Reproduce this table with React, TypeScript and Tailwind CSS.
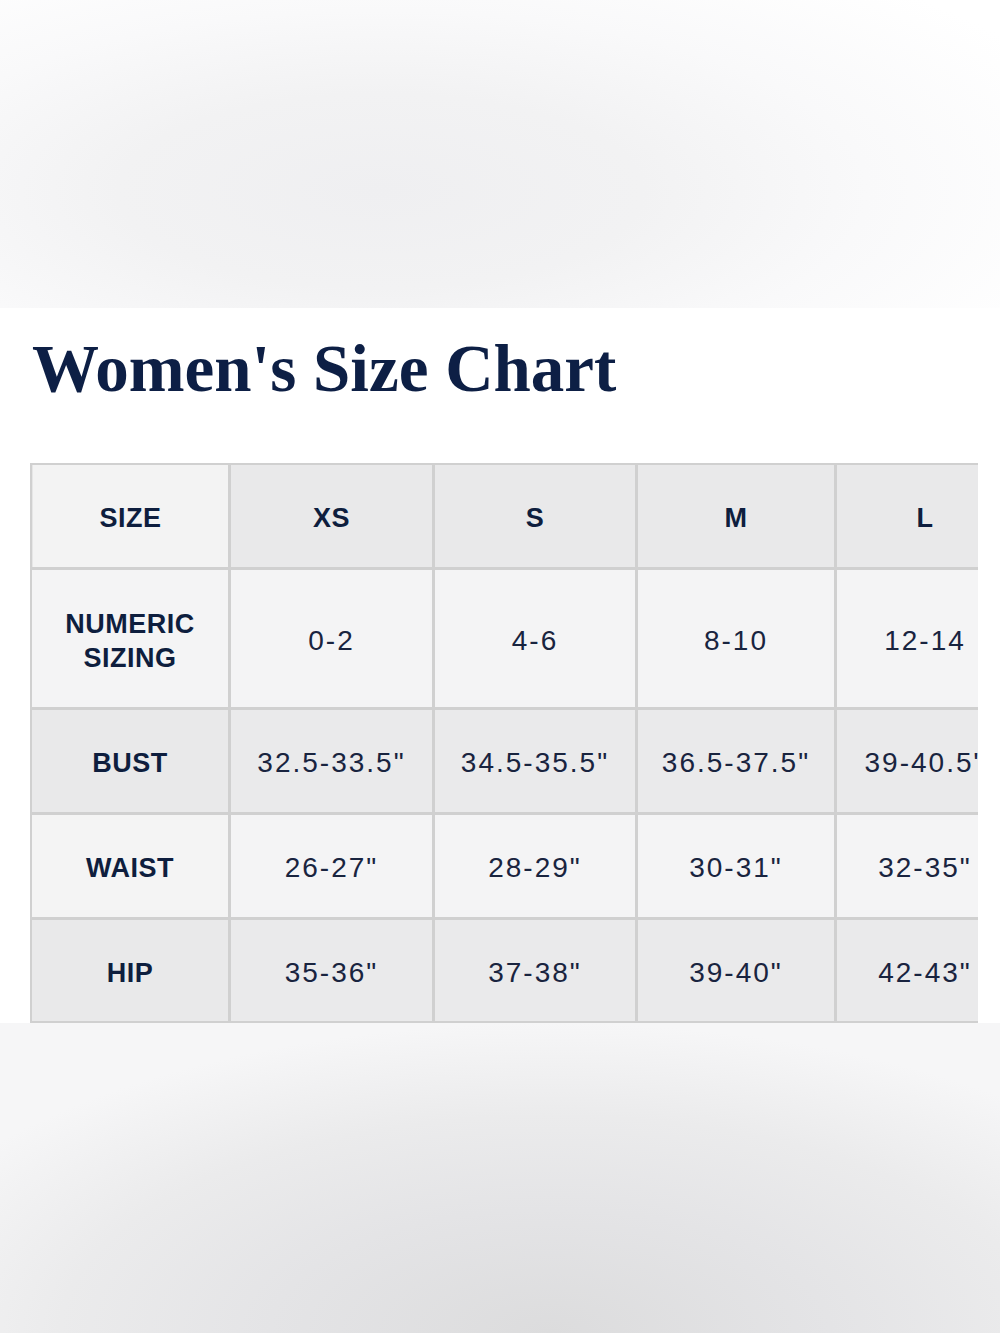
import React from "react";

const cols = ["XS", "S", "M", "L"];
const rows: { label: string[]; values: string[]; bg: string; firstBg: string }[] = [
  { label: ["NUMERIC", "SIZING"], values: ["0-2", "4-6", "8-10", "12-14"], bg: "bg-[#f4f4f5]", firstBg: "bg-[#f4f4f5]" },
  { label: ["BUST"], values: ["32.5-33.5\"", "34.5-35.5\"", "36.5-37.5\"", "39-40.5\""], bg: "bg-[#eaeaeb]", firstBg: "bg-[#e9e9ea]" },
  { label: ["WAIST"], values: ["26-27\"", "28-29\"", "30-31\"", "32-35\""], bg: "bg-[#f4f4f5]", firstBg: "bg-[#f4f4f4]" },
  { label: ["HIP"], values: ["35-36\"", "37-38\"", "39-40\"", "42-43\""], bg: "bg-[#eaeaeb]", firstBg: "bg-[#e9e9ea]" },
];
const heights = ["h-[137px]", "h-[102px]", "h-[102px]", "h-[101px]"];

export default function App() {
  return (
    <div className="w-[1000px] h-[1333px] flex flex-col bg-white" style={{ fontFamily: "'Liberation Sans', Arial, sans-serif" }}>
      <div className="h-[308px] bg-[radial-gradient(ellipse_75%_90%_at_38%_62%,#efeff1_0%,#f2f2f3_35%,#f9f9fa_65%,#ffffff_100%)]" />
      <div className="h-[715px] bg-white pt-[27px] flex flex-col">
        <h1
          className="pl-[32px] text-[67px] leading-none font-bold text-[#0d1f45]"
          style={{ fontFamily: "'Liberation Serif', 'Times New Roman', serif" }}
        >
          Women's Size Chart
        </h1>
        <div className="mt-[61px] ml-[30px] w-[948px] overflow-hidden">
          <div className="w-[1000px] bg-[#d0d0d0] pt-[2px] pb-[2px] pl-[2px] grid grid-cols-[196px_201px_200px_196px_176px] gap-[3px]">
            <div className="h-[102px] pt-[4px] bg-[#f3f3f3] flex items-center justify-center text-[27px] font-bold text-[#0e1e3e] tracking-[0.5px] border-l border-[#e6e6e6]">
              SIZE
            </div>
            {cols.map((c) => (
              <div key={c} className="h-[102px] pt-[4px] bg-[#e9e9ea] flex items-center justify-center text-[27px] font-bold text-[#0e1e3e] tracking-[0.5px]">
                {c}
              </div>
            ))}
            {rows.map((r, i) => (
              <React.Fragment key={i}>
                <div className={`${heights[i]} pt-[4px] ${r.firstBg} flex flex-col items-center justify-center text-[27px] leading-[34px] font-bold text-[#0e1e3e] tracking-[0.5px]`}>
                  {r.label.map((l) => (
                    <span key={l}>{l}</span>
                  ))}
                </div>
                {r.values.map((v, j) => (
                  <div key={j} className={`${heights[i]} pt-[4px] ${r.bg} flex items-center justify-center text-[28px] text-[#19243f] tracking-[2px] whitespace-nowrap`}>
                    {v}
                  </div>
                ))}
              </React.Fragment>
            ))}
          </div>
        </div>
      </div>
      <div className="flex-1 bg-[radial-gradient(ellipse_70%_100%_at_55%_100%,#dcdcdd_0%,#e4e4e6_40%,#ebebec_70%,#f6f6f7_100%)]" />
    </div>
  );
}
